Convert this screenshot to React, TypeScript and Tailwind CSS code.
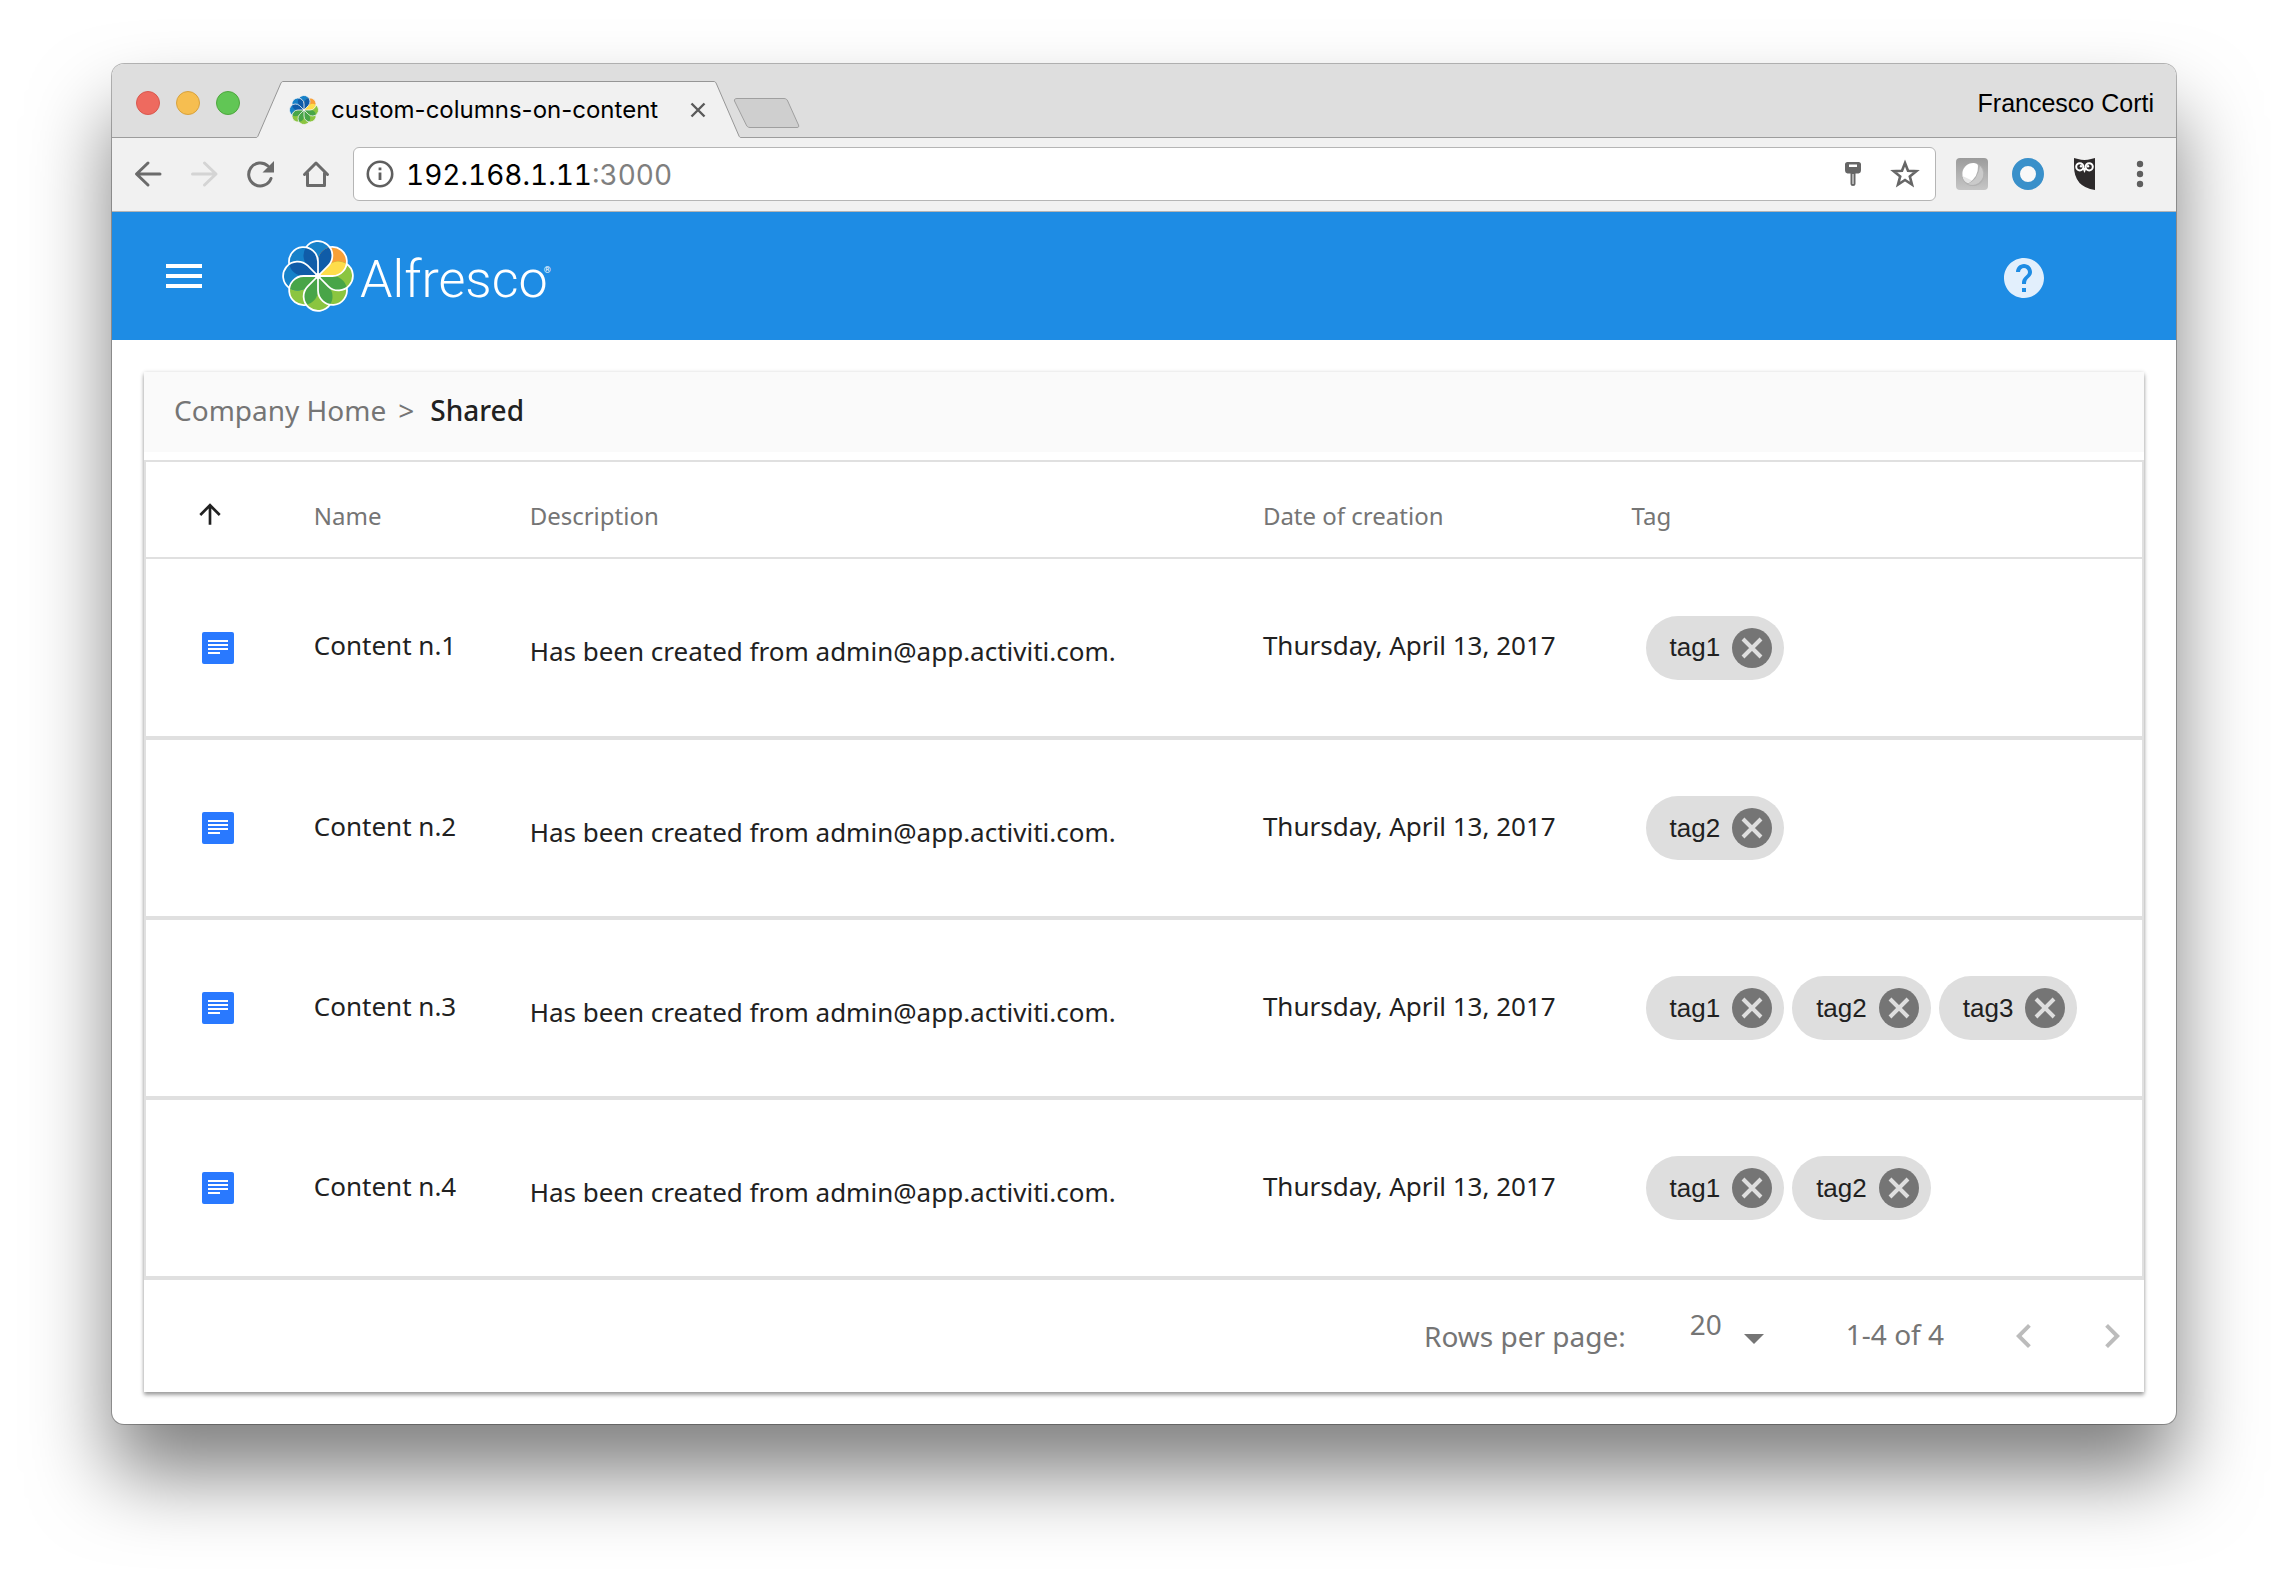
import type { ReactNode } from 'react';

type Row = { name: string; description: string; created: string; tags: string[] };

const DESCRIPTION = 'Has been created from admin@app.activiti.com.';
const CREATED = 'Thursday, April 13, 2017';

const ROWS: Row[] = [
  { name: 'Content n.1', description: DESCRIPTION, created: CREATED, tags: ['tag1'] },
  { name: 'Content n.2', description: DESCRIPTION, created: CREATED, tags: ['tag2'] },
  { name: 'Content n.3', description: DESCRIPTION, created: CREATED, tags: ['tag1', 'tag2', 'tag3'] },
  { name: 'Content n.4', description: DESCRIPTION, created: CREATED, tags: ['tag1', 'tag2'] },
];

const PETALS = [
  { angle: 0, fill: '#1681c9', lens: '#105ca8' },
  { angle: 45, fill: '#f9a037', lens: '#fedd4b' },
  { angle: 90, fill: '#8bc540', lens: '#48a548' },
  { angle: 135, fill: '#8bc540', lens: '#48a548' },
  { angle: 180, fill: '#8bc540', lens: '#48a548' },
  { angle: 225, fill: '#8bc540', lens: '#48a548' },
  { angle: 270, fill: '#1681c9', lens: '#105ca8' },
  { angle: 315, fill: '#1681c9', lens: '#105ca8' },
];

function Flower({ className, stroke, strokeWidth }: { className: string; stroke: string; strokeWidth: number }) {
  return (
    <svg viewBox="-37 -37 74 74" className={className} aria-hidden="true">
      {PETALS.map((p) => (
        <path
          key={p.angle}
          transform={`rotate(${p.angle})`}
          d="M0 0L10.55 -10.55A14.9 14.9 0 1 0 -10.55 -10.55Z"
          fill={p.fill}
        />
      ))}
      {/* where two petals overlap, the lens takes its own tint */}
      {PETALS.map((p) => (
        <path
          key={p.angle}
          transform={`rotate(${p.angle + 45})`}
          d="M0 0L0 -14.9A14.9 14.9 0 0 0 -12.25 -29.6A14.9 14.9 0 0 0 -10.55 -10.55Z"
          fill={p.lens}
        />
      ))}
      {PETALS.map((p) => (
        <path
          key={p.angle}
          transform={`rotate(${p.angle})`}
          d="M0 0L10.55 -10.55A14.9 14.9 0 1 0 -12.25 -29.6"
          fill="none"
          stroke={stroke}
          strokeWidth={strokeWidth}
          strokeLinejoin="round"
        />
      ))}
      <circle r="3" fill={stroke} />
    </svg>
  );
}

function IconButton({ label, className, children }: { label: string; className: string; children: ReactNode }) {
  return (
    <button type="button" aria-label={label} className={`flex shrink-0 items-center justify-center ${className}`}>
      {children}
    </button>
  );
}

function TabStrip() {
  return (
    <div className="flex h-[74px] items-stretch bg-[#dedede]">
      <div className="flex w-36 shrink-0 items-center gap-4 border-b border-[#9c9c9c] pt-1 pl-6">
        <button type="button" aria-label="Close window" className="size-6 rounded-full border border-[#d9584e] bg-[#ee6a5f]" />
        <button type="button" aria-label="Minimize window" className="size-6 rounded-full border border-[#d8a23d] bg-[#f6be50]" />
        <button type="button" aria-label="Zoom window" className="size-6 rounded-full border border-[#4ea73e] bg-[#61c655]" />
      </div>

      <div className="flex h-[57px] shrink-0 self-end">
        <svg viewBox="0 0 27 57" className="h-[57px] w-[27px]" aria-hidden="true">
          <path d="M0 57V56.5C1 56.5 1.5 56 2 55L24.5 3C25 1.5 26 .5 27 .5V57Z" fill="#f1f1f1" />
          <path d="M0 56.5C1 56.5 1.5 56 2 55L24.5 3C25 1.5 26 .5 27 .5" fill="none" stroke="#969696" />
        </svg>
        <div className="flex w-[431px] items-center border-t border-[#969696] bg-[#f1f1f1] pl-1.5">
          <Flower className="size-[30px]" stroke="#f1f1f1" strokeWidth={2} />
          <span className="ml-3 flex-1 whitespace-nowrap font-['Inter',sans-serif] text-[24px] text-black">
            custom-columns-on-content
          </span>
          <IconButton label="Close tab" className="mr-1 size-6">
            <svg viewBox="0 0 24 24" className="size-6" fill="none" stroke="#5a5a5a" strokeWidth="2.4">
              <path d="M5.5 5.5L18.5 18.5M18.5 5.5L5.5 18.5" />
            </svg>
          </IconButton>
        </div>
        <svg viewBox="0 0 27 57" className="h-[57px] w-[27px]" aria-hidden="true">
          <path d="M27 57V56.5C26 56.5 25.5 56 25 55L2.5 3C2 1.5 1 .5 0 .5V57Z" fill="#f1f1f1" />
          <path d="M27 56.5C26 56.5 25.5 56 25 55L2.5 3C2 1.5 1 .5 0 .5" fill="none" stroke="#969696" />
        </svg>
      </div>

      <div className="flex flex-1 items-center justify-between border-b border-[#9c9c9c] pr-[22px]">
        <IconButton label="New tab" className="-ml-2 mt-6">
          <svg viewBox="0 0 68 32" className="h-8 w-[68px]" aria-hidden="true">
            <path
              d="M4 1.5H51C53 1.5 54 2.5 54.7 4L65.5 28C66.2 29.7 65.5 30.5 64 30.5H17C15 30.5 14 29.5 13.3 28L1.5 4C1 2.5 2 1.5 4 1.5Z"
              fill="#cfcfcf"
              stroke="#9f9f9f"
            />
          </svg>
        </IconButton>
        <span className="pt-1.5 font-['Liberation_Sans',sans-serif] text-[25px] text-black">Francesco Corti</span>
      </div>
    </div>
  );
}

function Toolbar() {
  return (
    <div className="flex h-[74px] items-center gap-4 border-b border-[#b4b4b4] bg-[#f1f1f1] px-4 pb-0.5">
      <IconButton label="Back" className="size-10">
        <svg viewBox="0 0 40 40" className="size-10" fill="none" stroke="#6b6b6b" strokeWidth="3" strokeLinecap="round" strokeLinejoin="round">
          <path d="M32 20H9M20 9L8.5 20L20 31" />
        </svg>
      </IconButton>
      <IconButton label="Forward" className="size-10">
        <svg viewBox="0 0 40 40" className="size-10" fill="none" stroke="#d4d4d4" strokeWidth="3" strokeLinecap="round" strokeLinejoin="round">
          <path d="M8.5 20H31M20.5 9L32 20L20.5 31" />
        </svg>
      </IconButton>
      <IconButton label="Reload" className="size-10">
        <svg viewBox="0 0 40 40" className="size-10" fill="none">
          <path d="M31 24.5A11.5 11.5 0 1 1 28 12" stroke="#6b6b6b" strokeWidth="3" strokeLinecap="round" />
          <path d="M34 7V18.5H22.5Z" fill="#6b6b6b" />
        </svg>
      </IconButton>
      <IconButton label="Home" className="size-10">
        <svg viewBox="0 0 40 40" className="size-10" fill="none" stroke="#6b6b6b" strokeWidth="3" strokeLinecap="round" strokeLinejoin="round">
          <path d="M8.5 20.5L20 9L31.5 20.5M11.500 19V31.5H28.5V19" />
        </svg>
      </IconButton>

      <div className="ml-px flex h-[54px] flex-1 items-center rounded-md border border-[#b5b5b5] bg-white pr-3.5 pl-2.5">
        <IconButton label="Site information" className="size-8">
          <svg viewBox="0 0 32 32" className="size-8" fill="none" stroke="#5f5f5f">
            <circle cx="16" cy="16" r="12.2" strokeWidth="2.6" />
            <path d="M16 14.5V22" strokeWidth="2.8" />
            <path d="M16 9.500V12.3" strokeWidth="2.8" />
          </svg>
        </IconButton>
        <div
          role="textbox"
          aria-label="Address"
          className="ml-2.5 flex-1 whitespace-nowrap pt-0.5 font-['Inter',sans-serif] text-[28px] leading-9 text-black tabular-nums"
        >
          192.168.1.11<span className="text-[#7f7f7f]">:3000</span>
        </div>
        <div className="flex gap-5">
          <IconButton label="Saved passwords" className="size-8">
            <svg viewBox="0 0 32 32" className="size-8">
              <path
                d="M10.5 4H21.5Q24 4 24 6.5V12Q24 15 21.5 15.5H18.5V25.5Q18.5 28 16 28Q13.5 28 13.5 25.5V15.5H10.5Q8 15 8 12V6.5Q8 4 10.5 4Z"
                fill="#666"
              />
              <path d="M12 6.5H20V9H12ZM15.5 16H16.5V26H15.5Z" fill="#fff" />
            </svg>
          </IconButton>
          <IconButton label="Bookmark this page" className="size-8">
            <svg viewBox="0 0 32 32" className="size-8" fill="none" stroke="#666" strokeWidth="2.6">
              <path d="M16 5L19 12.8L27.3 13.2L20.8 18.4L23 26.5L16 22L9 26.5L11.2 18.4L4.7 13.2L13 12.8Z" />
            </svg>
          </IconButton>
        </div>
      </div>

      <div className="ml-1 flex items-center gap-6 pr-1">
        <IconButton label="Extension: Marble" className="size-8">
          <svg viewBox="0 0 32 32" className="size-8">
            <defs>
              <linearGradient id="tile" x1="0" y1="0" x2="0" y2="1">
                <stop offset="0" stopColor="#9b9b9b" />
                <stop offset="1" stopColor="#c6c6c6" />
              </linearGradient>
            </defs>
            <rect width="32" height="32" rx="4" fill="url(#tile)" />
            <circle cx="17" cy="16.5" r="11.5" fill="#b2b2b2" />
            <path d="M24 8A11 11 0 0 1 12 26Q22 22 24 8Z" fill="#cacaca" />
            <path d="M6.5 18A11 11 0 0 1 18 5Q22 5.5 22 8Q22.5 19 12.5 25Q8 24 6.5 18Z" fill="#fff" />
            <path d="M6.5 18L16 22.5L12.5 25Q8 24 6.5 18Z" fill="#e6e6e6" />
          </svg>
        </IconButton>
        <IconButton label="Extension: Ring" className="size-8">
          <svg viewBox="0 0 32 32" className="size-8">
            <circle cx="16" cy="16" r="12" fill="#f8f8f8" stroke="#3990ca" strokeWidth="8" />
          </svg>
        </IconButton>
        <IconButton label="Extension: Owl" className="size-8">
          <svg viewBox="0 0 32 32" className="size-8">
            <path d="M6 0L10 1Q16.5 3 23 1L27 0V32Q6 29 6 8Z" fill="#2d2a2b" />
            <circle cx="11.8" cy="8.8" r="3.6" fill="#2d2a2b" stroke="#fff" strokeWidth="2" />
            <circle cx="21.2" cy="8.8" r="3.6" fill="#2d2a2b" stroke="#fff" strokeWidth="2" />
            <circle cx="13" cy="8.2" r="1.2" fill="#fff" />
            <circle cx="20" cy="8.2" r="1.2" fill="#fff" />
            <path d="M14.8 11L16.5 9.5L18.2 11L16.5 15Z" fill="#fff" />
          </svg>
        </IconButton>
        <IconButton label="Browser menu" className="size-8">
          <svg viewBox="0 0 32 32" className="size-8" fill="#5f5f5f">
            <circle cx="16" cy="6" r="3.2" />
            <circle cx="16" cy="16" r="3.2" />
            <circle cx="16" cy="26" r="3.2" />
          </svg>
        </IconButton>
      </div>
    </div>
  );
}

function AppHeader() {
  return (
    <header className="flex h-32 items-center bg-[#1e8ce4] pr-[128px] pl-12">
      <IconButton label="Menu" className="size-12">
        <svg viewBox="0 0 24 24" className="size-12" fill="#fff">
          <path d="M3 18h18v-2H3v2zm0-5h18v-2H3v2zm0-7v2h18V6H3z" />
        </svg>
      </IconButton>
      <a href="#home" aria-label="Alfresco" className="ml-[74px] flex items-center">
        <Flower className="size-[72px]" stroke="#fff" strokeWidth={1.8} />
        <span className="pt-2 pl-1.5 font-['Roboto',sans-serif] text-[52px] leading-none font-light text-white">
          Alfresco
        </span>
        <span className="-ml-1 pb-3 font-['Roboto',sans-serif] text-[9px] leading-none text-white">®</span>
      </a>
      <IconButton label="Help" className="mt-1 ml-auto size-12">
        <svg viewBox="0 0 24 24" className="size-12" fill="#e2effc">
          <path d="M12 2C6.48 2 2 6.48 2 12s4.48 10 10 10 10-4.48 10-10S17.52 2 12 2zm1 17h-2v-2h2v2zm2.07-7.75l-.9.92C13.45 12.9 13 13.5 13 15h-2v-.5c0-1.1.45-2.1 1.17-2.83l1.24-1.26c.37-.36.59-.86.59-1.41 0-1.1-.9-2-2-2s-2 .9-2 2H8c0-2.21 1.79-4 4-4s4 1.79 4 4c0 .88-.36 1.68-.93 2.25z" />
        </svg>
      </IconButton>
    </header>
  );
}

function Tag({ label }: { label: string }) {
  return (
    <span className="flex h-16 items-center gap-3 rounded-full bg-[#dedede] pr-3 pl-6 font-['Liberation_Sans',sans-serif] text-[26px] text-[#212121]">
      {label}
      <IconButton label={`Remove ${label}`} className="size-10 rounded-full bg-[#757575]">
        <svg viewBox="0 0 40 40" className="size-10" fill="none" stroke="#dedede" strokeWidth="4">
          <path d="M11 11L29 29M29 11L11 29" />
        </svg>
      </IconButton>
    </span>
  );
}

function DocumentTable() {
  return (
    <table className="w-full table-fixed border-2 border-b-0 border-[#e0e0e0] text-left">
      <colgroup>
        <col className="w-[7.25%]" />
        <col className="w-[10.8%]" />
        <col className="w-[36.7%]" />
        <col className="w-[18.45%]" />
        <col />
      </colgroup>
      <thead>
        <tr className="h-[97px] border-b-2 border-[#e0e0e0] text-[24px] text-[#757575]">
          <th className="pt-2 pl-12 font-normal">
            <IconButton label="Sort ascending" className="size-8">
              <svg viewBox="0 0 24 24" className="size-8" fill="#212121">
                <path d="M4 12l1.41 1.41L11 7.83V20h2V7.83l5.58 5.59L20 12l-8-8-8 8z" />
              </svg>
            </IconButton>
          </th>
          <th className="pt-3 pl-6 font-normal">Name</th>
          <th className="pt-3 pl-6 font-normal">Description</th>
          <th className="pt-3 pl-6 font-normal">Date of creation</th>
          <th className="pt-3 pl-6 font-normal">Tag</th>
        </tr>
      </thead>
      <tbody>
        {ROWS.map((row) => (
          <tr key={row.name} className="h-[180px] border-b-4 border-[#e0e0e0] text-[26px] text-[#212121]">
            <td className="pl-14">
              <svg viewBox="0 0 32 32" className="size-8" role="img" aria-label="Document">
                <rect width="32" height="32" rx="2" fill="#2979ff" />
                <path d="M6 8h20v2H6zM6 12h20v2H6zM6 16h20v2H6zM6 20h12v2H6z" fill="#fff" />
              </svg>
            </td>
            <td className="pb-1 pl-6">{row.name}</td>
            <td className="pt-2 pl-6">{row.description}</td>
            <td className="pb-1 pl-6">{row.created}</td>
            <td className="pl-[38px]">
              <div className="flex gap-2">
                {row.tags.map((tag) => (
                  <Tag key={tag} label={tag} />
                ))}
              </div>
            </td>
          </tr>
        ))}
      </tbody>
    </table>
  );
}

function Pagination() {
  return (
    <div className="flex h-28 items-center justify-end pr-2 text-[28px] text-[#757575]">
      <label htmlFor="page-size">Rows per page:</label>
      <select id="page-size" className="ml-16 w-8 appearance-none pb-6">
        <option>20</option>
      </select>
      <svg viewBox="0 0 24 24" className="mt-1 ml-2 size-12" fill="#757575" aria-hidden="true">
        <path d="M7 10l5 5 5-5z" />
      </svg>
      <span className="mb-1 ml-17">1-4 of 4</span>
      <IconButton label="Previous page" className="ml-14 size-12">
        <svg viewBox="0 0 24 24" className="size-12" fill="#bcbcbc">
          <path d="M15.41 7.41L14 6l-6 6 6 6 1.41-1.41L10.83 12z" />
        </svg>
      </IconButton>
      <IconButton label="Next page" className="ml-10 size-12">
        <svg viewBox="0 0 24 24" className="size-12" fill="#bcbcbc">
          <path d="M10 6L8.59 7.41 13.17 12l-4.58 4.59L10 18l6-6z" />
        </svg>
      </IconButton>
    </div>
  );
}

export default function App() {
  return (
    <div className="min-h-screen overflow-hidden bg-white px-28 pt-16 pb-40 font-['Noto_Sans',sans-serif]">
      <div className="overflow-hidden rounded-xl bg-white shadow-[0_0_0_1px_rgba(0,0,0,0.28),0_50px_80px_rgba(0,0,0,0.5)]">
        <TabStrip />
        <Toolbar />
        <AppHeader />
        <main className="px-8 py-8">
          <section className="bg-white shadow-[0_3px_4px_rgba(0,0,0,0.36),0_0_4px_rgba(0,0,0,0.12)]">
            <nav aria-label="Breadcrumb" className="flex h-20 items-center gap-3 bg-[#fafafa] px-[30px] pb-1 text-[28px] text-[#757575]">
              <a href="#company-home">Company Home</a>
              <span>&gt;</span>
              <span aria-current="page" className="ml-1 font-medium text-[#212121]">
                Shared
              </span>
            </nav>
            <div className="pt-2">
              <DocumentTable />
            </div>
            <Pagination />
          </section>
        </main>
      </div>
    </div>
  );
}
